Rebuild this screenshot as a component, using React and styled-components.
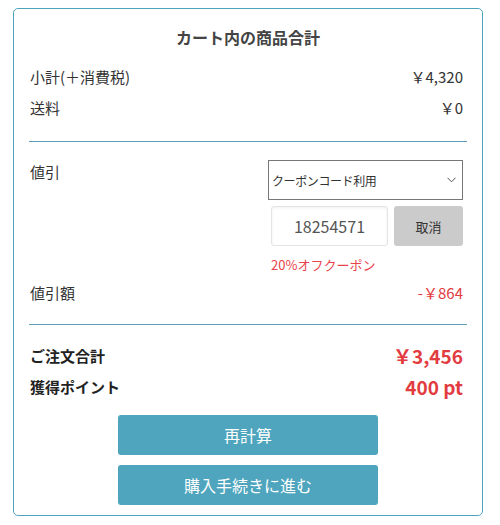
import React from 'react';
import styled, { createGlobalStyle } from 'styled-components';

const GlobalStyle = createGlobalStyle`
  html, body {
    margin: 0;
    padding: 0;
    background: #fff;
  }
  body {
    font-family: "Noto Sans CJK JP", "Noto Sans", sans-serif;
    color: #333;
  }
`;

const Page = styled.div`
  padding: 8px 0 0 13px;
`;

const Card = styled.section`
  width: 470px;
  box-sizing: border-box;
  border: 1px solid #4fa4bd;
  border-radius: 5px;
  padding: 16px 15px 10px;
`;

const Title = styled.h2`
  margin: 0;
  font-size: 16px;
  line-height: 24px;
  font-weight: bold;
  text-align: center;
  color: #444;
`;

const List = styled.div`
  margin-top: ${(p) => p.$top || 12}px;
`;

const Row = styled.div`
  display: flex;
  justify-content: space-between;
  align-items: center;
  padding: 0 4px 0 1px;
  margin-top: ${(p) => p.$top || 0}px;
  height: ${(p) => p.$h || 31}px;
  font-size: 15px;
  font-weight: ${(p) => (p.$strong ? 'bold' : 'normal')};
  color: ${(p) => (p.$strong ? '#222' : '#333')};
`;

const Value = styled.span`
  color: ${(p) => (p.$red ? '#e23b40' : '#333')};
  font-size: ${(p) => p.$size || 15}px;
  font-weight: ${(p) => (p.$bold ? 'bold' : 'normal')};
`;

const Divider = styled.hr`
  margin: ${(p) => p.$top}px 0 0;
  border: 0;
  height: 1px;
  background: #5e9fb5;
`;

const Discount = styled.div`
  display: flex;
  justify-content: space-between;
  padding: 18px 4px 0 1px;
`;

const Label = styled.span`
  font-size: 15px;
  line-height: 24px;
`;

const CouponCol = styled.div`
  width: 195px;
  display: flex;
  flex-direction: column;
`;

const SelectBox = styled.div`
  height: 40px;
  box-sizing: border-box;
  border: 1px solid #777;
  display: flex;
  align-items: center;
  justify-content: space-between;
  padding: 0 6px 0 3px;
  font-size: 12px;
  color: #333;
  letter-spacing: -0.4px;
`;

const CodeRow = styled.div`
  display: flex;
  gap: 6px;
  margin-top: 6px;
  padding-left: 3px;
`;

const CodeInput = styled.input`
  width: 117px;
  height: 40px;
  box-sizing: border-box;
  border: 1px solid #e4e4e4;
  border-radius: 3px;
  box-shadow: inset 0 1px 3px rgba(0, 0, 0, 0.06);
  text-align: center;
  font-family: inherit;
  font-size: 16px;
  color: #555;
  outline: none;
`;

const CancelButton = styled.button`
  flex: 1;
  height: 40px;
  border: 0;
  border-radius: 3px;
  background: #cbcbcb;
  font-family: inherit;
  font-size: 13px;
  color: #333;
`;

const CouponNote = styled.p`
  margin: 9px 0 0 3px;
  font-size: 13px;
  line-height: 20px;
  color: #e8434a;
`;

const Buttons = styled.div`
  display: flex;
  flex-direction: column;
  align-items: center;
  gap: 10px;
  margin-top: 13px;
`;

const MainButton = styled.button`
  width: 260px;
  height: 40px;
  border: 0;
  border-radius: 3px;
  background: #4ea5bd;
  color: #fff;
  font-family: inherit;
  font-size: 16px;
`;

const Chevron = () => (
  <svg width="9" height="6" viewBox="0 0 9 6" fill="none">
    <path d="M0.5 0.8 L4.5 4.8 L8.5 0.8" stroke="#555" strokeWidth="1" />
  </svg>
);

export default function App() {
  return (
    <Page>
      <GlobalStyle />
      <Card>
        <Title>カート内の商品合計</Title>
        <List>
          <Row>
            <span>小計(＋消費税)</span>
            <Value>￥4,320</Value>
          </Row>
          <Row>
            <span>送料</span>
            <Value>￥0</Value>
          </Row>
        </List>
        <Divider $top={18} />

        <Discount>
          <Label>値引</Label>
          <CouponCol>
            <SelectBox>
              <span>クーポンコード利用</span>
              <Chevron />
            </SelectBox>
            <CodeRow>
              <CodeInput value="18254571" readOnly />
              <CancelButton>取消</CancelButton>
            </CodeRow>
            <CouponNote>20%オフクーポン</CouponNote>
          </CouponCol>
        </Discount>
        <Row $h={30} $top={2}>
          <span>値引額</span>
          <Value $red>-￥864</Value>
        </Row>
        <Divider $top={17} />

        <List $top={15}>
          <Row $strong>
            <span>ご注文合計</span>
            <Value $red $bold $size={19}>￥3,456</Value>
          </Row>
          <Row $strong>
            <span>獲得ポイント</span>
            <Value $red $bold $size={19}>400 pt</Value>
          </Row>
        </List>

        <Buttons>
          <MainButton>再計算</MainButton>
          <MainButton>購入手続きに進む</MainButton>
        </Buttons>
      </Card>
    </Page>
  );
}
